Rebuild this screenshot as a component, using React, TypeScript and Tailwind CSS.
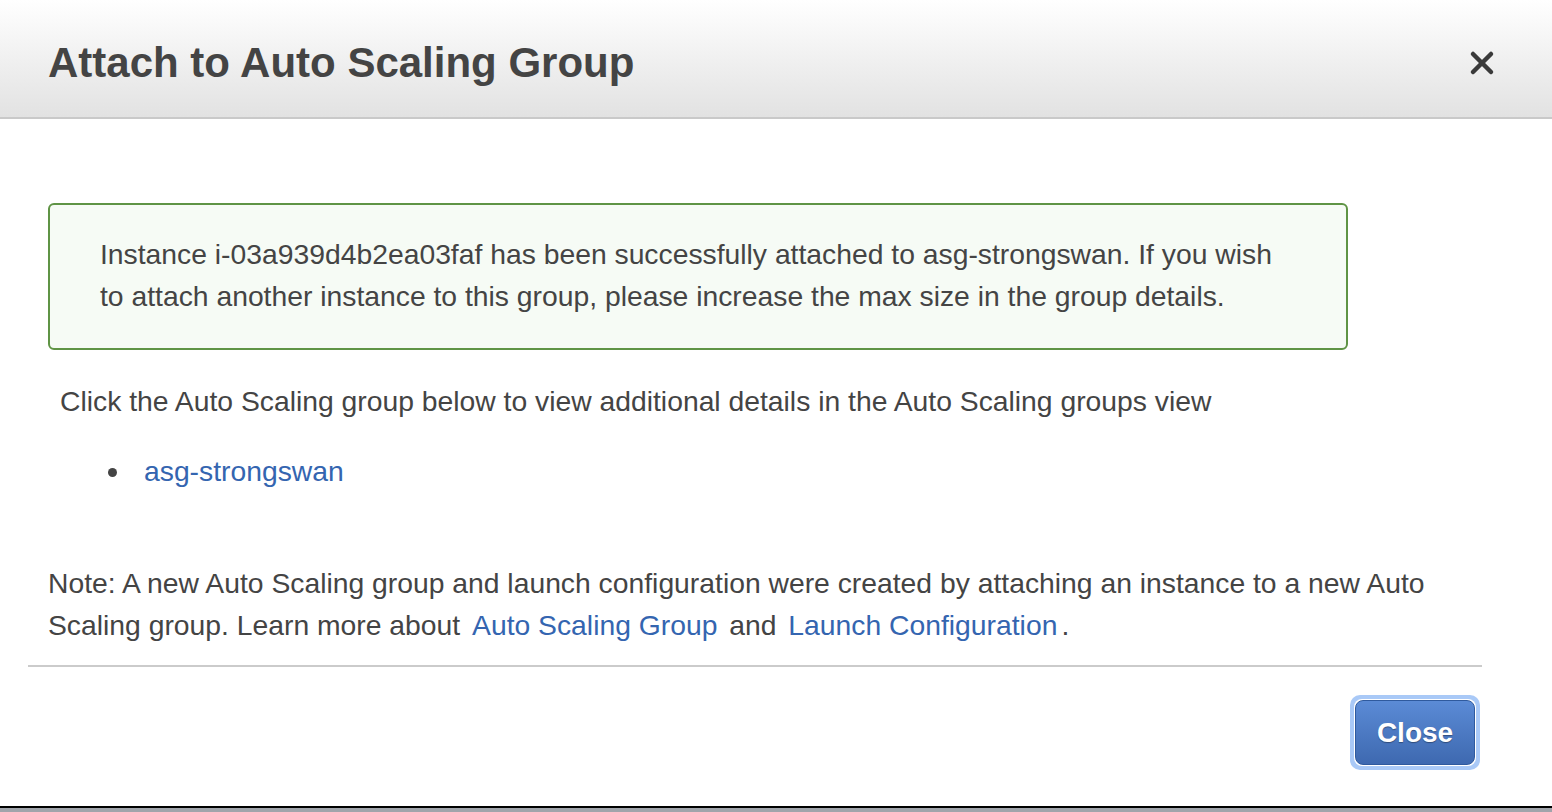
import { X } from 'lucide-react'

export default function App() {
  return (
    <div
      className="h-[812px] w-full bg-white flex flex-col text-[#444] overflow-hidden"
      style={{ fontFamily: '"Liberation Sans", Arial, sans-serif' }}
    >
      {/* Header */}
      <div className="h-[119px] shrink-0 bg-gradient-to-b from-white to-[#e2e2e2] border-b-2 border-[#c9c9c9] flex items-center justify-between pl-12 pr-[52px] pt-2">
        <h1 className="text-[42px] font-bold text-[#444]">Attach to Auto Scaling Group</h1>
        <X className="w-9 h-9 text-[#3a3a3a]" strokeWidth={3} />
      </div>

      {/* Body */}
      <div className="flex-1 flex flex-col px-12 pt-[84px] text-[28.3px] leading-[42px]">
        <div className="w-[1300px] h-[147px] border-2 border-[#5f9445] bg-[#f6fbf5] rounded-md pl-[50px] pr-4 pt-[28px]">
          <p className="text-[#444] whitespace-nowrap">
            Instance i-03a939d4b2ea03faf has been successfully attached to asg-strongswan. If you wish
            <br />
            to attach another instance to this group, please increase the max size in the group details.
          </p>
        </div>

        <p className="mt-[30px] ml-3 whitespace-nowrap">
          Click the Auto Scaling group below to view additional details in the Auto Scaling groups view
        </p>

        <ul className="mt-[28px] ml-[84px] list-disc marker:text-[#444]">
          <li className="pl-3">
            <a className="text-[#3465b0]">asg-strongswan</a>
          </li>
        </ul>

        <p className="mt-[70px] whitespace-nowrap">
          Note: A new Auto Scaling group and launch configuration were created by attaching an instance to a new Auto
          <br />
          Scaling group. Learn more about <a className="text-[#3465b0] ml-1 mr-1">Auto Scaling Group</a> and{' '}
          <a className="text-[#3465b0] ml-1 mr-1">Launch Configuration</a>.
        </p>
      </div>

      {/* Footer */}
      <div className="shrink-0 pl-[28px] pr-[70px]">
        <div className="h-[2px] bg-[#cbcbcb] mb-[28px]" />
        <div className="flex justify-end pr-[2px] pb-[36px]">
          <div className="rounded-[10px] bg-[#a9c9f7] p-[4px]">
            <div className="rounded-[8px] bg-white p-[1px]">
              <button className="w-[120px] h-[65px] rounded-[8px] border border-[#2f5a9e] bg-gradient-to-b from-[#5b8bd6] to-[#3e69b0] text-white text-[28px] font-bold [text-shadow:0_1px_1px_rgba(0,0,0,0.35)]">
                Close
              </button>
            </div>
          </div>
        </div>
      </div>

      <div className="h-[2px] bg-black shrink-0" />
      <div className="h-[4px] bg-[#a0a4ab] shrink-0" />
    </div>
  )
}
